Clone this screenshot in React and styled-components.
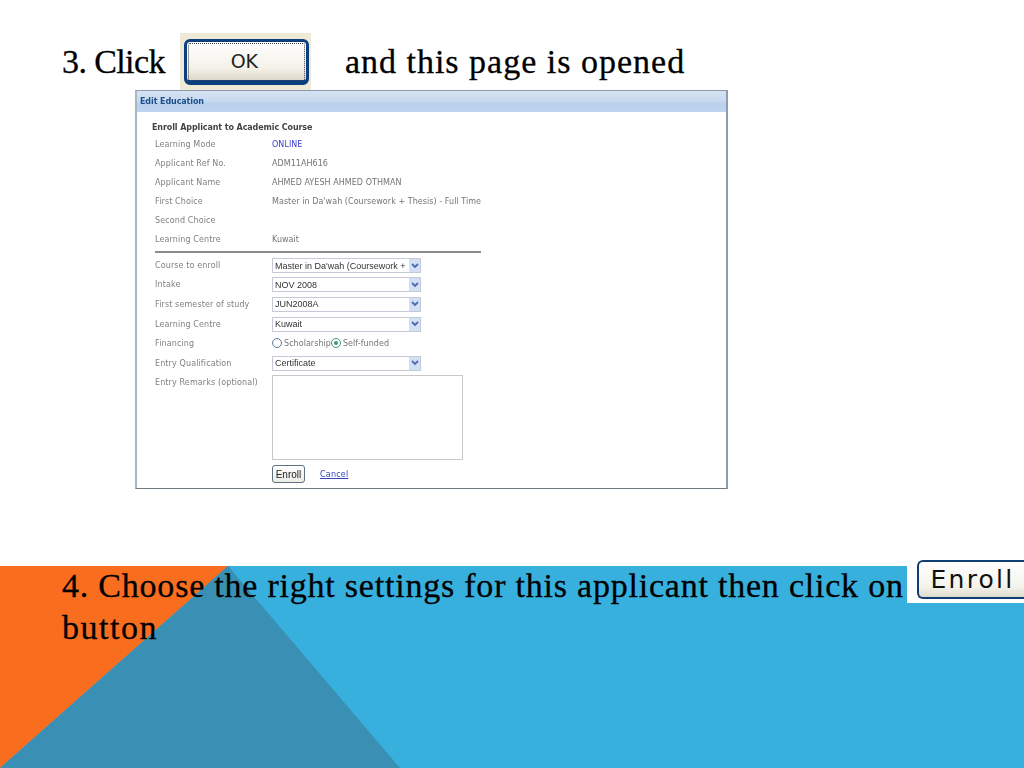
import React from 'react';
import styled, { createGlobalStyle } from 'styled-components';

const GlobalStyle = createGlobalStyle`
  html, body { margin: 0; padding: 0; background: #fff; }
`;

const Slide = styled.div`
  width: 1024px;
  height: 768px;
  overflow: hidden;
  display: flex;
  flex-direction: column;
  font-family: "Liberation Serif", "DejaVu Serif", serif;
  color: #000;
`;

const Upper = styled.div`
  height: 566px;
  padding: 33px 0 0 62px;
  box-sizing: border-box;
  display: flex;
  flex-direction: column;
`;

const StepRow = styled.div`
  display: flex;
  align-items: center;
  height: 57px;
`;

const StepText = styled.span`
  font-size: 34px;
  line-height: 57px;
  white-space: nowrap;
  letter-spacing: ${p => p.$spacing || 0}px;
  -webkit-text-stroke: 0.3px #000;
  margin-top: -1px;
`;

const OkFrame = styled.div`
  width: 131px;
  height: 57px;
  margin: 0 34px 0 15px;
  background: #efe9d8;
  box-sizing: border-box;
  padding: 6px 2px 5px 4px;
`;

const OkButton = styled.div`
  height: 100%;
  box-sizing: border-box;
  border: 3px solid #0b3f7f;
  border-bottom-width: 5px;
  border-radius: 6px;
  outline: 1px dotted #444;
  outline-offset: -5px;
  background: linear-gradient(#fff, #f3f1e8 70%, #dcd8c8);
  display: flex;
  align-items: center;
  justify-content: center;
  padding-right: 4px;
  font-family: "DejaVu Sans", sans-serif;
  font-size: 19px;
  color: #222;
`;

const Panel = styled.div`
  width: 593px;
  height: 399px;
  margin-left: 73px;
  box-sizing: border-box;
  border: 1px solid #8f9aa8;
  border-left: 2px solid #a9b6c6;
  border-right: 2px solid #8e9cb0;
  border-bottom: 1px solid #6f7a80;
  background: #fff;
  font-family: "DejaVu Sans", sans-serif;
  font-size: 8px;
  color: #808080;
  filter: blur(0.5px);
`;

const PanelHeader = styled.div`
  height: 21px;
  padding-left: 3px;
  display: flex;
  align-items: center;
  background: linear-gradient(#d5e2f3, #c9daef 45%, #b9d1ec 60%, #bcd4ee);
  color: #1d4f8c;
  font-weight: bold;
  font-size: 8px;
  letter-spacing: -0.1px;
`;

const PanelBody = styled.div`
  padding: 9px 0 0 15px;
  display: flex;
  flex-direction: column;
`;

const FormTitle = styled.div`
  height: 14px;
  line-height: 14px;
  font-weight: bold;
  color: #444;
  letter-spacing: -0.1px;
`;

const Row = styled.div`
  display: flex;
  align-items: center;
  height: ${p => p.$height || 19}px;
  padding-left: 3px;
`;

const Label = styled.div`
  width: 117px;
  flex: none;
  letter-spacing: 0.12px;
`;

const Value = styled.div`
  white-space: nowrap;
  color: ${p => p.$color || '#747474'};
  letter-spacing: 0.05px;
`;

const Divider = styled.div`
  width: 326px;
  height: 2px;
  margin: 2px 0 3px 3px;
  background: #8c8c8c;
`;

const Select = styled.div`
  width: 149px;
  height: 15px;
  box-sizing: border-box;
  border: 1px solid #c5cbd6;
  display: flex;
  align-items: center;
  justify-content: space-between;
  font-family: "Liberation Sans", sans-serif;
  font-size: 9px;
  color: #333;
  padding-left: 2px;
  white-space: nowrap;
`;

const SelectText = styled.span`
  flex: 1;
`;

const Arrow = styled.span`
  width: 11px;
  height: 13px;
  flex: none;
  background: #d3dff5;
  display: flex;
  align-items: center;
  justify-content: center;
`;

const RadioGroup = styled.div`
  display: flex;
  align-items: center;
`;

const Radio = styled.span`
  width: 10px;
  height: 10px;
  box-sizing: border-box;
  border: 1px solid ${p => (p.$on ? '#3f9a78' : '#5a7a9a')};
  border-radius: 50%;
  margin-right: 2px;
  margin-top: -2px;
  display: flex;
  align-items: center;
  justify-content: center;
  &::after {
    content: "";
    width: 4px;
    height: 4px;
    border-radius: 50%;
    background: ${p => (p.$on ? '#3f9a78' : 'transparent')};
  }
`;

const RemarksRow = styled.div`
  display: flex;
  padding-left: 3px;
  margin-top: 2px;
`;

const RemarksLabel = styled(Label)`
  padding-top: 3px;
`;

const Remarks = styled.div`
  width: 191px;
  height: 85px;
  box-sizing: border-box;
  border: 1px solid #c8c8c8;
`;

const ActionRow = styled.div`
  display: flex;
  align-items: center;
  margin: 5px 0 0 120px;
`;

const EnrollSmall = styled.div`
  width: 33px;
  height: 18px;
  box-sizing: border-box;
  border: 1px solid #5f7082;
  border-radius: 3px;
  background: linear-gradient(#fff, #ecebe4);
  display: flex;
  align-items: center;
  justify-content: center;
  font-family: "Liberation Sans", sans-serif;
  font-size: 10px;
  color: #222;
`;

const CancelLink = styled.a`
  margin-left: 15px;
  color: #3344bb;
  text-decoration: underline;
  letter-spacing: 0.2px;
`;

const Band = styled.div`
  position: relative;
  flex: 1;
  background: #38b0de;
  padding-left: 62px;
`;

const BandArt = styled.svg`
  position: absolute;
  left: 0;
  top: 0;
`;

const BandText = styled.div`
  position: relative;
  margin-top: -1px;
  font-size: 34px;
  line-height: 42px;
  white-space: nowrap;
  -webkit-text-stroke: 0.3px #000;
`;

const BandLine = styled.div`
  letter-spacing: ${p => p.$spacing}px;
`;

const EnrollFrame = styled.div`
  position: absolute;
  right: 0;
  top: -8px;
  width: 117px;
  height: 45px;
  background: #fff;
  padding: 2px 0 0 10px;
  box-sizing: border-box;
`;

const EnrollButton = styled.div`
  height: 39px;
  box-sizing: border-box;
  border: 2px solid #0f3f70;
  border-right: none;
  border-radius: 6px 0 0 6px;
  background: linear-gradient(#fff, #f4f3ec 70%, #dedbcd);
  display: flex;
  align-items: center;
  justify-content: center;
  padding-left: 2px;
  font-family: "DejaVu Sans", sans-serif;
  font-size: 25px;
  letter-spacing: 2.2px;
  color: #111;
`;

const ChevronIcon = () => (
  <svg width="8" height="6" viewBox="0 0 8 6">
    <path d="M1 1 L4 4 L7 1" fill="none" stroke="#4a6cb4" strokeWidth="1.8" />
  </svg>
);

const Choice = ({ children }) => (
  <Select>
    <SelectText>{children}</SelectText>
    <Arrow><ChevronIcon /></Arrow>
  </Select>
);

const infoRows = [
  ['Learning Mode', 'ONLINE', '#3b3bd6'],
  ['Applicant Ref No.', 'ADM11AH616'],
  ['Applicant Name', 'AHMED AYESH AHMED OTHMAN'],
  ['First Choice', "Master in Da'wah (Coursework + Thesis) - Full Time"],
  ['Second Choice', ''],
  ['Learning Centre', 'Kuwait'],
];

export default function App() {
  return (
    <Slide>
      <GlobalStyle />
      <Upper>
        <StepRow>
          <StepText $spacing={-0.6}>3. Click</StepText>
          <OkFrame><OkButton>OK</OkButton></OkFrame>
          <StepText $spacing={1}>and this page is opened</StepText>
        </StepRow>
        <Panel>
          <PanelHeader>Edit Education</PanelHeader>
          <PanelBody>
            <FormTitle>Enroll Applicant to Academic Course</FormTitle>
            {infoRows.map(([label, value, color]) => (
              <Row key={label}>
                <Label>{label}</Label>
                <Value $color={color}>{value}</Value>
              </Row>
            ))}
            <Divider />
            <Row><Label>Course to enroll</Label><Choice>Master in Da'wah (Coursework +</Choice></Row>
            <Row><Label>Intake</Label><Choice>NOV 2008</Choice></Row>
            <Row $height={20}><Label>First semester of study</Label><Choice>JUN2008A</Choice></Row>
            <Row $height={20}><Label>Learning Centre</Label><Choice>Kuwait</Choice></Row>
            <Row>
              <Label>Financing</Label>
              <RadioGroup>
                <Radio />
                <Value>Scholarship</Value>
                <Radio $on />
                <Value>Self-funded</Value>
              </RadioGroup>
            </Row>
            <Row $height={20}><Label>Entry Qualification</Label><Choice>Certificate</Choice></Row>
            <RemarksRow>
              <RemarksLabel>Entry Remarks (optional)</RemarksLabel>
              <Remarks />
            </RemarksRow>
            <ActionRow>
              <EnrollSmall>Enroll</EnrollSmall>
              <CancelLink>Cancel</CancelLink>
            </ActionRow>
          </PanelBody>
        </Panel>
      </Upper>
      <Band>
        <BandArt width="1024" height="202" viewBox="0 0 1024 202">
          <polygon points="0,0 228,0 0,202" fill="#f96d1f" />
          <polygon points="228,0 400,202 0,202" fill="#3a90b4" />
        </BandArt>
        <BandText>
          <BandLine $spacing={0.78}>4. Choose the right settings for this applicant then click on</BandLine>
          <BandLine $spacing={1.5}>button</BandLine>
        </BandText>
        <EnrollFrame><EnrollButton>Enroll</EnrollButton></EnrollFrame>
      </Band>
    </Slide>
  );
}
